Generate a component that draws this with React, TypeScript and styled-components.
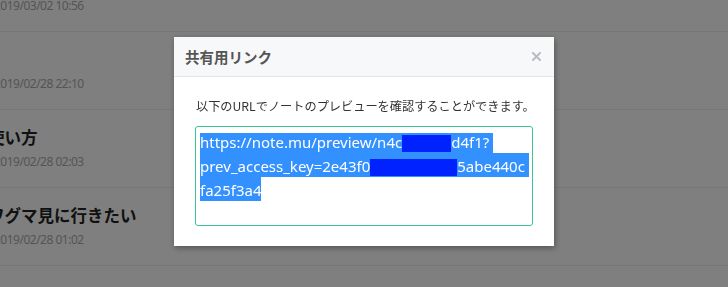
import React from "react";
import styled, { createGlobalStyle } from "styled-components";

const GlobalStyle = createGlobalStyle`
  html, body {
    margin: 0;
    padding: 0;
    background: #fff;
    overflow: hidden;
  }
  body {
    font-family: "Noto Sans", "Noto Sans CJK JP", sans-serif;
  }
`;

const notes = [
  { title: "", date: "2019/03/02 10:56" },
  { title: "", date: "2019/02/28 22:10" },
  { title: "使い方", date: "2019/02/28 02:03" },
  { title: "ワグマ見に行きたい", date: "2019/02/28 01:02" },
  { title: "", date: "2019/02/27 23:41" },
];

const StyledPage = styled.div`
  position: relative;
  width: 728px;
  height: 287px;
  overflow: hidden;
`;

const NoteList = styled.ul`
  list-style: none;
  margin: -46px 0 0 -12px;
  padding: 0;
`;

const NoteRow = styled.li`
  padding: 15px 0 16px;
  border-bottom: 1px solid #eee;
`;

const NoteTitle = styled.div`
  height: 24px;
  line-height: 24px;
  font-family: "Noto Sans CJK JP", sans-serif;
  font-size: 16.5px;
  font-weight: bold;
  color: #222;
`;

const NoteDate = styled.div`
  margin-top: 4px;
  padding-left: 6px;
  line-height: 18px;
  font-size: 12px;
  letter-spacing: -0.5px;
  color: #aaa;
`;

const Overlay = styled.div`
  position: fixed;
  inset: 0;
  background: rgba(0, 0, 0, 0.5);
  display: flex;
  justify-content: center;
  align-items: flex-start;
  padding-top: 37px;
`;

const Modal = styled.div`
  width: 380px;
  background: #fff;
  box-shadow: 1px 2px 6px rgba(0, 0, 0, 0.35);
`;

const ModalHeader = styled.header`
  height: 39px;
  display: flex;
  align-items: center;
  justify-content: space-between;
  padding: 0 13px 0 11px;
  background: #f7f8fa;
  border-bottom: 1px solid #e3e5e8;
`;

const ModalTitle = styled.h2`
  margin: 0;
  font-family: "Noto Sans CJK JP", sans-serif;
  font-size: 14.5px;
  font-weight: bold;
  color: #555;
  line-height: 20px;
`;

const CloseButton = styled.button`
  display: flex;
  padding: 0;
  border: 0;
  background: none;
  color: #babdc1;
  cursor: pointer;
`;

const ModalBody = styled.div`
  padding: 20px 21px;
`;

const Lead = styled.p`
  margin: 0 0 10px;
  padding-left: 1px;
  font-family: "Noto Sans CJK JP", sans-serif;
  font-size: 12.2px;
  line-height: 19px;
  white-space: nowrap;
  color: #333;
`;

const UrlBox = styled.div`
  box-sizing: border-box;
  height: 100px;
  padding: 2px 4px;
  border: 1px solid #3cc39d;
  border-radius: 3px;
  font-size: 15px;
`;

const UrlLine = styled.div`
  height: 24px;
`;

const Sel = styled.span<{ $first?: boolean }>`
  display: inline-block;
  box-sizing: border-box;
  height: 24px;
  padding-top: 2px;
  line-height: 22px;
  white-space: pre;
  color: #fff;
  background: ${(p) =>
    p.$first
      ? "linear-gradient(to bottom, transparent 4px, #3390ff 4px)"
      : "#3390ff"};
`;

const Redact = styled.span<{ $w: number }>`
  display: inline-block;
  width: ${(p) => p.$w}px;
  height: 17px;
  vertical-align: -4px;
  background: #0022ff;
`;

function CloseIcon() {
  return (
    <svg width="9" height="9" viewBox="0 0 9 9">
      <path
        d="M1 1L8 8M8 1L1 8"
        stroke="currentColor"
        strokeWidth="2"
        strokeLinecap="square"
      />
    </svg>
  );
}

export default function App() {
  return (
    <StyledPage>
      <GlobalStyle />
      <NoteList>
        {notes.map((n, i) => (
          <NoteRow key={i}>
            <NoteTitle>{n.title || "\u00a0"}</NoteTitle>
            <NoteDate>{n.date}</NoteDate>
          </NoteRow>
        ))}
      </NoteList>
      <Overlay>
        <Modal>
          <ModalHeader>
            <ModalTitle>共有用リンク</ModalTitle>
            <CloseButton aria-label="close">
              <CloseIcon />
            </CloseButton>
          </ModalHeader>
          <ModalBody>
            <Lead>以下のURLでノートのプレビューを確認することができます。</Lead>
            <UrlBox>
              <UrlLine>
                <Sel $first>
                  https://note.mu/preview/n4c<Redact $w={49} />d4f1?{" "}
                </Sel>
              </UrlLine>
              <UrlLine>
                <Sel>
                  prev_access_key=2e43f0<Redact $w={87} />5abe440c{" "}
                </Sel>
              </UrlLine>
              <UrlLine>
                <Sel>fa25f3a4</Sel>
              </UrlLine>
            </UrlBox>
          </ModalBody>
        </Modal>
      </Overlay>
    </StyledPage>
  );
}
